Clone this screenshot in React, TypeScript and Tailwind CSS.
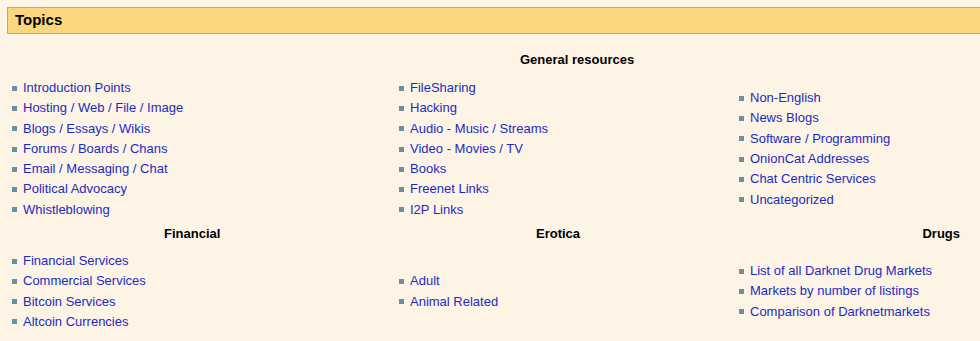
import React from 'react';

type Section = {
  title?: string;
  align?: string;
  items: string[];
};

const rowOne: Section[] = [
  {
    items: [
      'Introduction Points',
      'Hosting / Web / File / Image',
      'Blogs / Essays / Wikis',
      'Forums / Boards / Chans',
      'Email / Messaging / Chat',
      'Political Advocacy',
      'Whistleblowing',
    ],
  },
  {
    items: ['FileSharing', 'Hacking', 'Audio - Music / Streams', 'Video - Movies / TV', 'Books', 'Freenet Links', 'I2P Links'],
  },
  {
    items: ['Non-English', 'News Blogs', 'Software / Programming', 'OnionCat Addresses', 'Chat Centric Services', 'Uncategorized'],
  },
];

const rowTwo: Section[] = [
  {
    title: 'Financial',
    align: 'pl-[157px]',
    items: ['Financial Services', 'Commercial Services', 'Bitcoin Services', 'Altcoin Currencies'],
  },
  {
    title: 'Erotica',
    align: 'pl-[142px]',
    items: ['Adult', 'Animal Related'],
  },
  {
    title: 'Drugs',
    align: 'text-right pr-[20px]',
    items: ['List of all Darknet Drug Markets', 'Markets by number of listings', 'Comparison of Darknetmarkets'],
  },
];

const LinkList = ({ items }: { items: string[] }) => (
  <ul className="pl-[5px]">
    {items.map((item) => (
      <li key={item} className="flex items-center h-[20.3px] leading-[20.3px]">
        <span className="mr-[6px] inline-block h-[5px] w-[5px] bg-[#6a8fa0]" />
        <a href="#" className="text-[#1a2cc0] whitespace-nowrap">
          {item}
        </a>
      </li>
    ))}
  </ul>
);

export default function App() {
  return (
    <div className="h-[341px] w-[980px] overflow-hidden bg-[#fdf4e6] font-['Liberation_Sans',Arial,sans-serif] text-[13px] text-black">
      <div className="ml-[7px] mt-[7px] flex h-[27px] w-[990px] items-center border border-[#b3a2b8] bg-[#fad67f] pl-[7px] text-[15px] font-bold">
        Topics
      </div>

      <div className="grid grid-cols-[387px_340px_1fr] pl-[7px]">
        {/* general resources */}
        <div className="mt-[16px] h-[20px]" />
        <div className="mt-[16px] h-[20px] pl-[126px] font-bold leading-[20px]">General resources</div>
        <div className="mt-[16px] h-[20px]" />

        {rowOne.map((s, i) => (
          <div key={i} className="mt-[8px] flex h-[142px] items-center">
            <LinkList items={s.items} />
          </div>
        ))}

        {rowTwo.map((s) => (
          <div key={s.title} className={`mt-[4px] h-[20px] font-bold leading-[20px] ${s.align}`}>
            {s.title}
          </div>
        ))}

        {rowTwo.map((s) => (
          <div key={s.title + '-list'} className="mt-[7px] flex h-[81px] items-center">
            <LinkList items={s.items} />
          </div>
        ))}
      </div>
    </div>
  );
}
